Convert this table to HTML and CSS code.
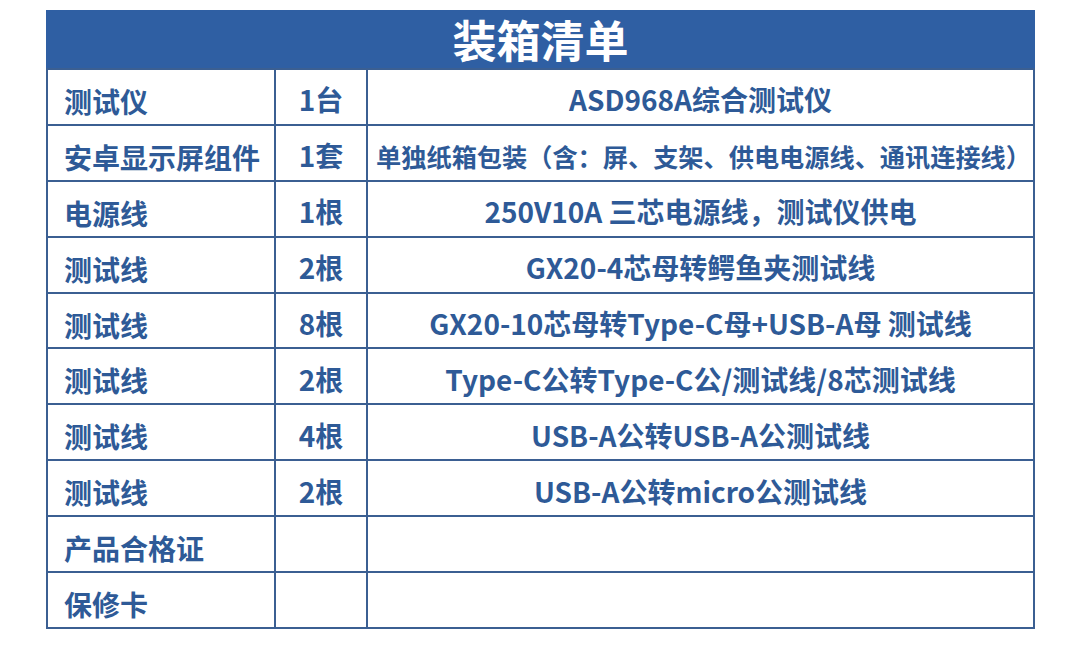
FILE: index.html
```html
<!DOCTYPE html>
<html lang="zh-CN">
<head>
<meta charset="utf-8">
<title>装箱清单</title>
<link rel="stylesheet" href="styles.css">
</head>
<body>
<table class="packing">
  <colgroup>
    <col class="c-name">
    <col class="c-qty">
    <col class="c-desc">
  </colgroup>
  <thead>
    <tr><th colspan="3" class="title">装箱清单</th></tr>
  </thead>
  <tbody>
    <tr><td class="name">测试仪</td><td class="qty">1台</td><td class="desc">ASD968A综合测试仪</td></tr>
    <tr><td class="name">安卓显示屏组件</td><td class="qty">1套</td><td class="desc small">单独纸箱包装（含：屏、支架、供电电源线、通讯连接线）</td></tr>
    <tr><td class="name">电源线</td><td class="qty">1根</td><td class="desc">250V10A 三芯电源线，测试仪供电</td></tr>
    <tr><td class="name">测试线</td><td class="qty">2根</td><td class="desc">GX20-4芯母转鳄鱼夹测试线</td></tr>
    <tr><td class="name">测试线</td><td class="qty">8根</td><td class="desc">GX20-10芯母转Type-C母+USB-A母 测试线</td></tr>
    <tr><td class="name">测试线</td><td class="qty">2根</td><td class="desc">Type-C公转Type-C公/测试线/8芯测试线</td></tr>
    <tr><td class="name">测试线</td><td class="qty">4根</td><td class="desc">USB-A公转USB-A公测试线</td></tr>
    <tr><td class="name">测试线</td><td class="qty">2根</td><td class="desc">USB-A公转micro公测试线</td></tr>
    <tr><td class="name">产品合格证</td><td class="qty"></td><td class="desc"></td></tr>
    <tr><td class="name">保修卡</td><td class="qty"></td><td class="desc"></td></tr>
  </tbody>
</table>
</body>
</html>
```

FILE: styles.css
```css
html, body {
  margin: 0;
  padding: 0;
  background: #ffffff;
}

body {
  padding: 10px 0 0 46px;
  font-family: "Noto Sans CJK SC", "Noto Sans", sans-serif;
  font-weight: 700;
  color: #2e5a97;
}

.packing {
  border-collapse: collapse;
  table-layout: fixed;
  width: 989px;
  border: 2px solid #3b5f92;
}

.c-name { width: 228px; }
.c-qty { width: 92px; }

.title {
  background: #2f5fa3;
  color: #ffffff;
  font-size: 44px;
  line-height: 1;
  height: 53px;
  padding: 0 0 3px 0;
  text-align: center;
  vertical-align: middle;
  border: 2px solid #2f5fa3;
  border-bottom: 2px solid #3b5f92;
}

td {
  border: 2px solid #3b5f92;
  height: 55.9px;
  padding: 5px 0 0 0;
  box-sizing: border-box;
  font-size: 28px;
  line-height: 1;
  vertical-align: middle;
  white-space: nowrap;
}

.name {
  padding-left: 16px;
  font-size: 28px;
  padding-top: 8px;
}

.qty {
  text-align: center;
}

.desc {
  text-align: center;
}

.desc.small {
  font-size: 25.2px;
  padding-top: 8px;
  padding-left: 6px;
}
```
